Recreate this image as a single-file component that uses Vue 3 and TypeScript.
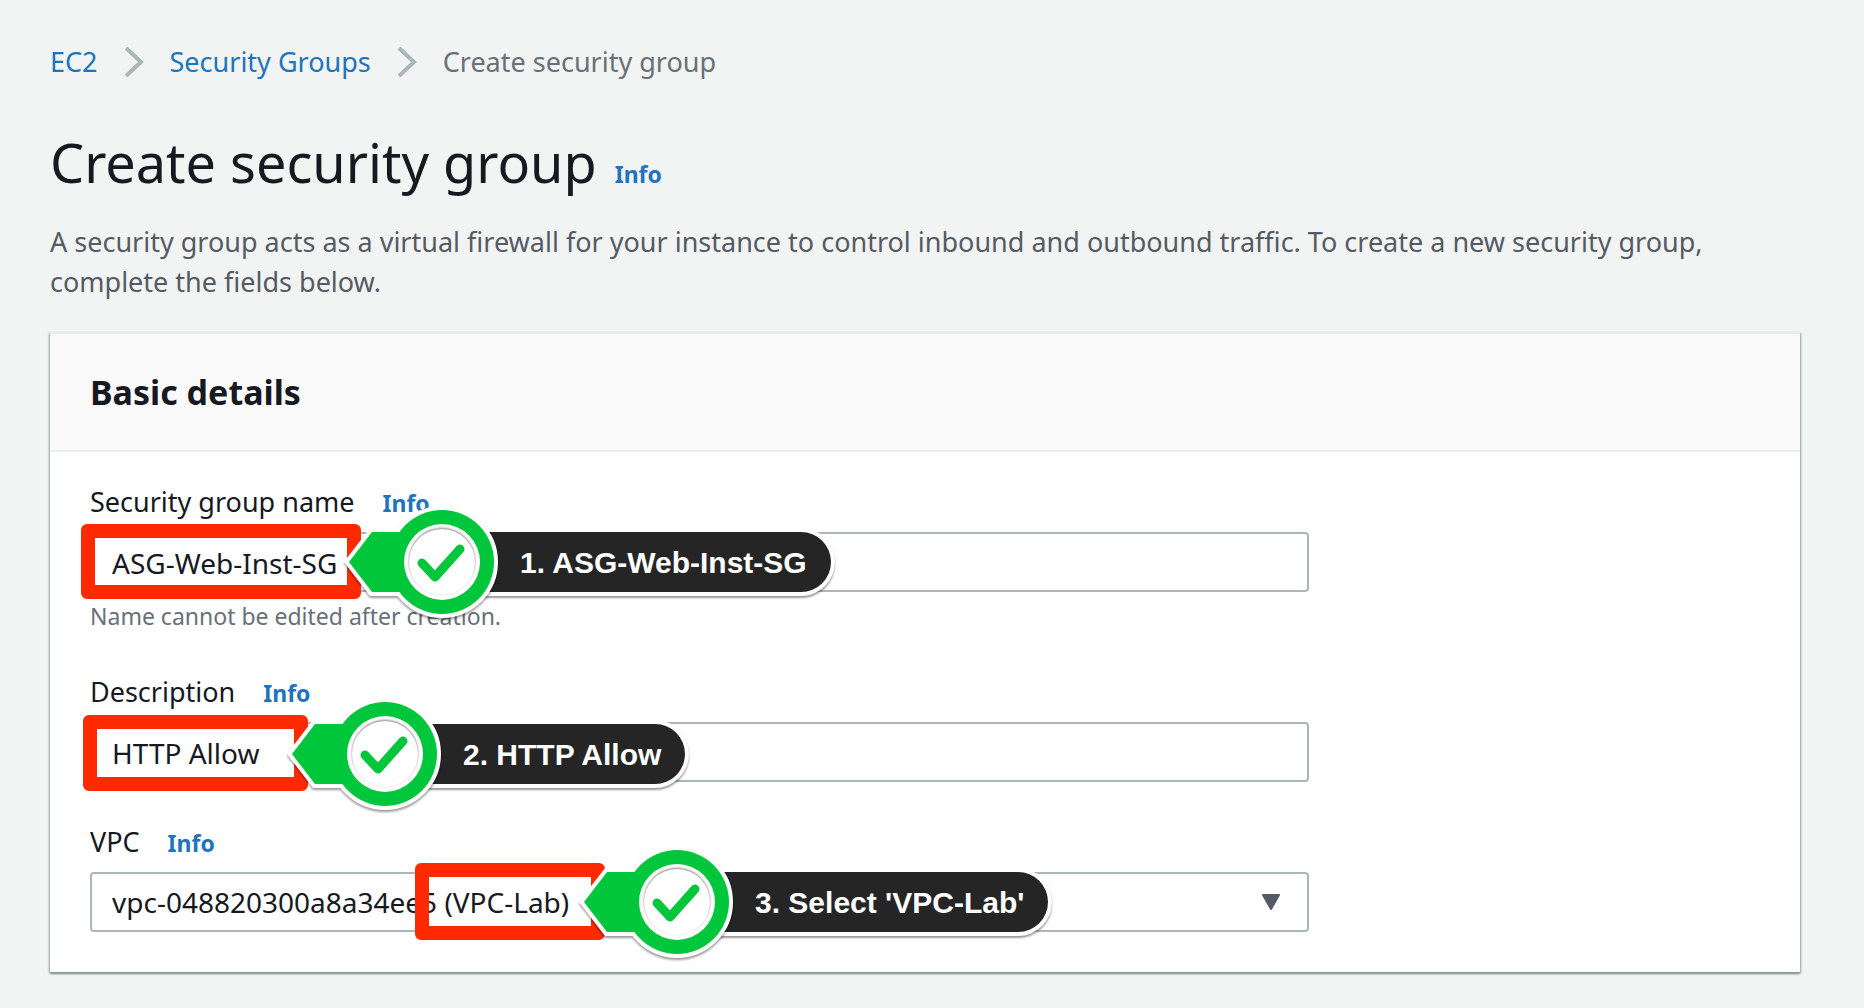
<script setup lang="ts">
import { ref } from 'vue'

interface Box {
  left: number
  top: number
  width: number
  height: number
}

interface Step {
  text: string
  left: number
  top: number
  frame: Box
}

interface Field {
  id: string
  label: string
  kind: 'text' | 'select'
  hint?: string
  step: Step
}

const values = ref<Record<string, string>>({
  name: 'ASG-Web-Inst-SG',
  description: 'HTTP Allow',
  vpc: 'vpc-048820300a8a34ee5 (VPC-Lab)',
})

// Frame and step offsets are measured from the top left corner of the control.
const fields: Field[] = [
  {
    id: 'name',
    label: 'Security group name',
    kind: 'text',
    hint: 'Name cannot be edited after creation.',
    step: {
      text: '1. ASG-Web-Inst-SG',
      left: 251,
      top: -30,
      frame: { left: -9, top: -8, width: 280, height: 75 },
    },
  },
  {
    id: 'description',
    label: 'Description',
    kind: 'text',
    step: {
      text: '2. HTTP Allow',
      left: 194,
      top: -28,
      frame: { left: -7, top: -7, width: 225, height: 76 },
    },
  },
  {
    id: 'vpc',
    label: 'VPC',
    kind: 'select',
    step: {
      text: "3. Select 'VPC-Lab'",
      left: 486,
      top: -30,
      frame: { left: 325, top: -9, width: 190, height: 77 },
    },
  },
]

const px = (box: Partial<Box>) =>
  Object.fromEntries(Object.entries(box).map(([key, value]) => [key, `${value}px`]))
</script>

<template>
  <main class="page">
    <nav class="crumbs" aria-label="Breadcrumb">
      <a href="#">EC2</a>
      <svg class="chevron" viewBox="0 0 20 30" aria-hidden="true"><path d="M2 1 L17 15 L2 29" /></svg>
      <a href="#">Security Groups</a>
      <svg class="chevron" viewBox="0 0 20 30" aria-hidden="true"><path d="M2 1 L17 15 L2 29" /></svg>
      <span>Create security group</span>
    </nav>

    <header class="intro">
      <div class="title">
        <h1>Create security group</h1>
        <a class="info" href="#">Info</a>
      </div>
      <p>
        A security group acts as a virtual firewall for your instance to control inbound and outbound
        traffic. To create a new security group, complete the fields below.
      </p>
    </header>

    <section class="card">
      <h2>Basic details</h2>
      <form class="fields" @submit.prevent>
        <div v-for="field in fields" :key="field.id" class="field">
          <div class="caption">
            <label :for="field.id">{{ field.label }}</label>
            <a class="info" href="#">Info</a>
          </div>
          <div class="control">
            <input v-if="field.kind === 'text'" :id="field.id" v-model="values[field.id]" type="text" />
            <template v-else>
              <select :id="field.id" v-model="values[field.id]">
                <option>{{ values[field.id] }}</option>
              </select>
              <svg class="caret" viewBox="0 0 20 16" aria-hidden="true">
                <path d="M2 1 H18 L10 15 Z" />
              </svg>
            </template>
            <div class="frame" :style="px(field.step.frame)"></div>
            <div class="step" :style="px({ left: field.step.left, top: field.step.top })">
              <svg class="marker" viewBox="0 0 160 120" aria-hidden="true">
                <g class="edge">
                  <path d="M8 60 L31 30 H80 V90 H31 Z" />
                  <circle cx="101" cy="60" r="52" />
                </g>
                <path class="green" d="M8 60 L31 30 H80 V90 H31 Z" />
                <circle class="green" cx="101" cy="60" r="52" />
                <circle class="disc" cx="101" cy="60" r="38" />
                <circle class="groove" cx="101" cy="60" r="33" />
                <path class="tick" d="M81 61 L94 75 L119 47" />
              </svg>
              <span class="pill">{{ field.step.text }}</span>
            </div>
          </div>
          <p v-if="field.hint" class="hint">{{ field.hint }}</p>
        </div>
      </form>
    </section>
  </main>
</template>

<style>
body {
  background: #f2f4f3;
}
</style>

<style scoped>
.page {
  box-sizing: border-box;
  padding: 42px 64px 36px 50px;
  font-family: 'Noto Sans', sans-serif;
  font-size: 27px;
  line-height: 40px;
  color: #16191f;
}

a {
  color: #2074bd;
  text-decoration: none;
}

h1,
h2,
p {
  margin: 0;
}

.crumbs {
  display: flex;
  align-items: center;
  gap: 26px;
  color: #687078;
}

.chevron {
  width: 20px;
  height: 30px;
  fill: none;
  stroke: #aab7b8;
  stroke-width: 4;
}

.intro {
  padding: 44px 0 30px;
  color: #545b64;
}

.title {
  display: flex;
  align-items: baseline;
  gap: 18px;
  margin-bottom: 24px;
}

h1 {
  font-size: 54px;
  font-weight: 400;
  line-height: 72px;
  color: #16191f;
}

.info {
  font-size: 23px;
  font-weight: 700;
  line-height: 24px;
}

.card {
  background: #fff;
  border-top: 2px solid #eaeded;
  box-shadow: 0 2px 2px #879596, 1px 1px 2px #aab7b8, -1px 1px 2px #aab7b8;
}

h2 {
  padding: 38px 40px;
  background: #fafafa;
  border-bottom: 2px solid #eaeded;
  font-size: 34px;
  font-weight: 700;
  line-height: 40px;
}

.fields {
  display: flex;
  flex-direction: column;
  gap: 40px;
  padding: 30px 40px 40px;
}

.caption {
  display: flex;
  align-items: baseline;
  gap: 28px;
  margin-bottom: 10px;
}

.control {
  position: relative;
  width: 73%;
}

input,
select {
  box-sizing: border-box;
  display: block;
  width: 100%;
  height: 60px;
  margin: 0;
  padding: 0 20px;
  border: 2px solid #aab7b8;
  border-radius: 4px;
  background: #fff;
  color: inherit;
  font-family: inherit;
  font-size: 28px;
  appearance: none;
}

input {
  padding-top: 2px;
}

.caret {
  position: absolute;
  top: 22px;
  right: 28px;
  width: 20px;
  height: 16px;
  fill: #545b64;
  stroke: #545b64;
  stroke-width: 2;
  stroke-linejoin: round;
  pointer-events: none;
}

.hint {
  padding-top: 8px;
  font-size: 23px;
  line-height: 32px;
  color: #687078;
}

.frame {
  position: absolute;
  box-sizing: border-box;
  border: 14px solid #ff2a00;
  border-radius: 6px;
  pointer-events: none;
}

.step {
  position: absolute;
  display: flex;
  align-items: center;
  height: 120px;
  pointer-events: none;
}

.marker {
  position: relative;
  z-index: 1;
  flex: none;
  width: 160px;
  height: 120px;
  overflow: visible;
}

.edge {
  fill: #fff;
  stroke: #fff;
  stroke-width: 8;
  filter: drop-shadow(0 2px 1px rgba(0, 0, 0, 0.4));
}

.green {
  fill: #00c63c;
}

.disc {
  fill: #fff;
}

.groove {
  fill: #fff;
  filter: drop-shadow(0 -1px 1px rgba(0, 0, 0, 0.5));
}

.tick {
  fill: none;
  stroke: #00c63c;
  stroke-width: 9;
  stroke-linecap: round;
  stroke-linejoin: round;
}

.pill {
  height: 60px;
  margin-left: -60px;
  padding: 0 24px 0 79px;
  border-radius: 0 30px 30px 0;
  background: #252525;
  box-shadow: 0 0 0 4px #fff, 0 2px 2px 4px rgba(0, 0, 0, 0.4);
  color: #fff;
  font-family: 'Liberation Sans', sans-serif;
  font-size: 30px;
  font-weight: 700;
  line-height: 62px;
  white-space: nowrap;
}
</style>
